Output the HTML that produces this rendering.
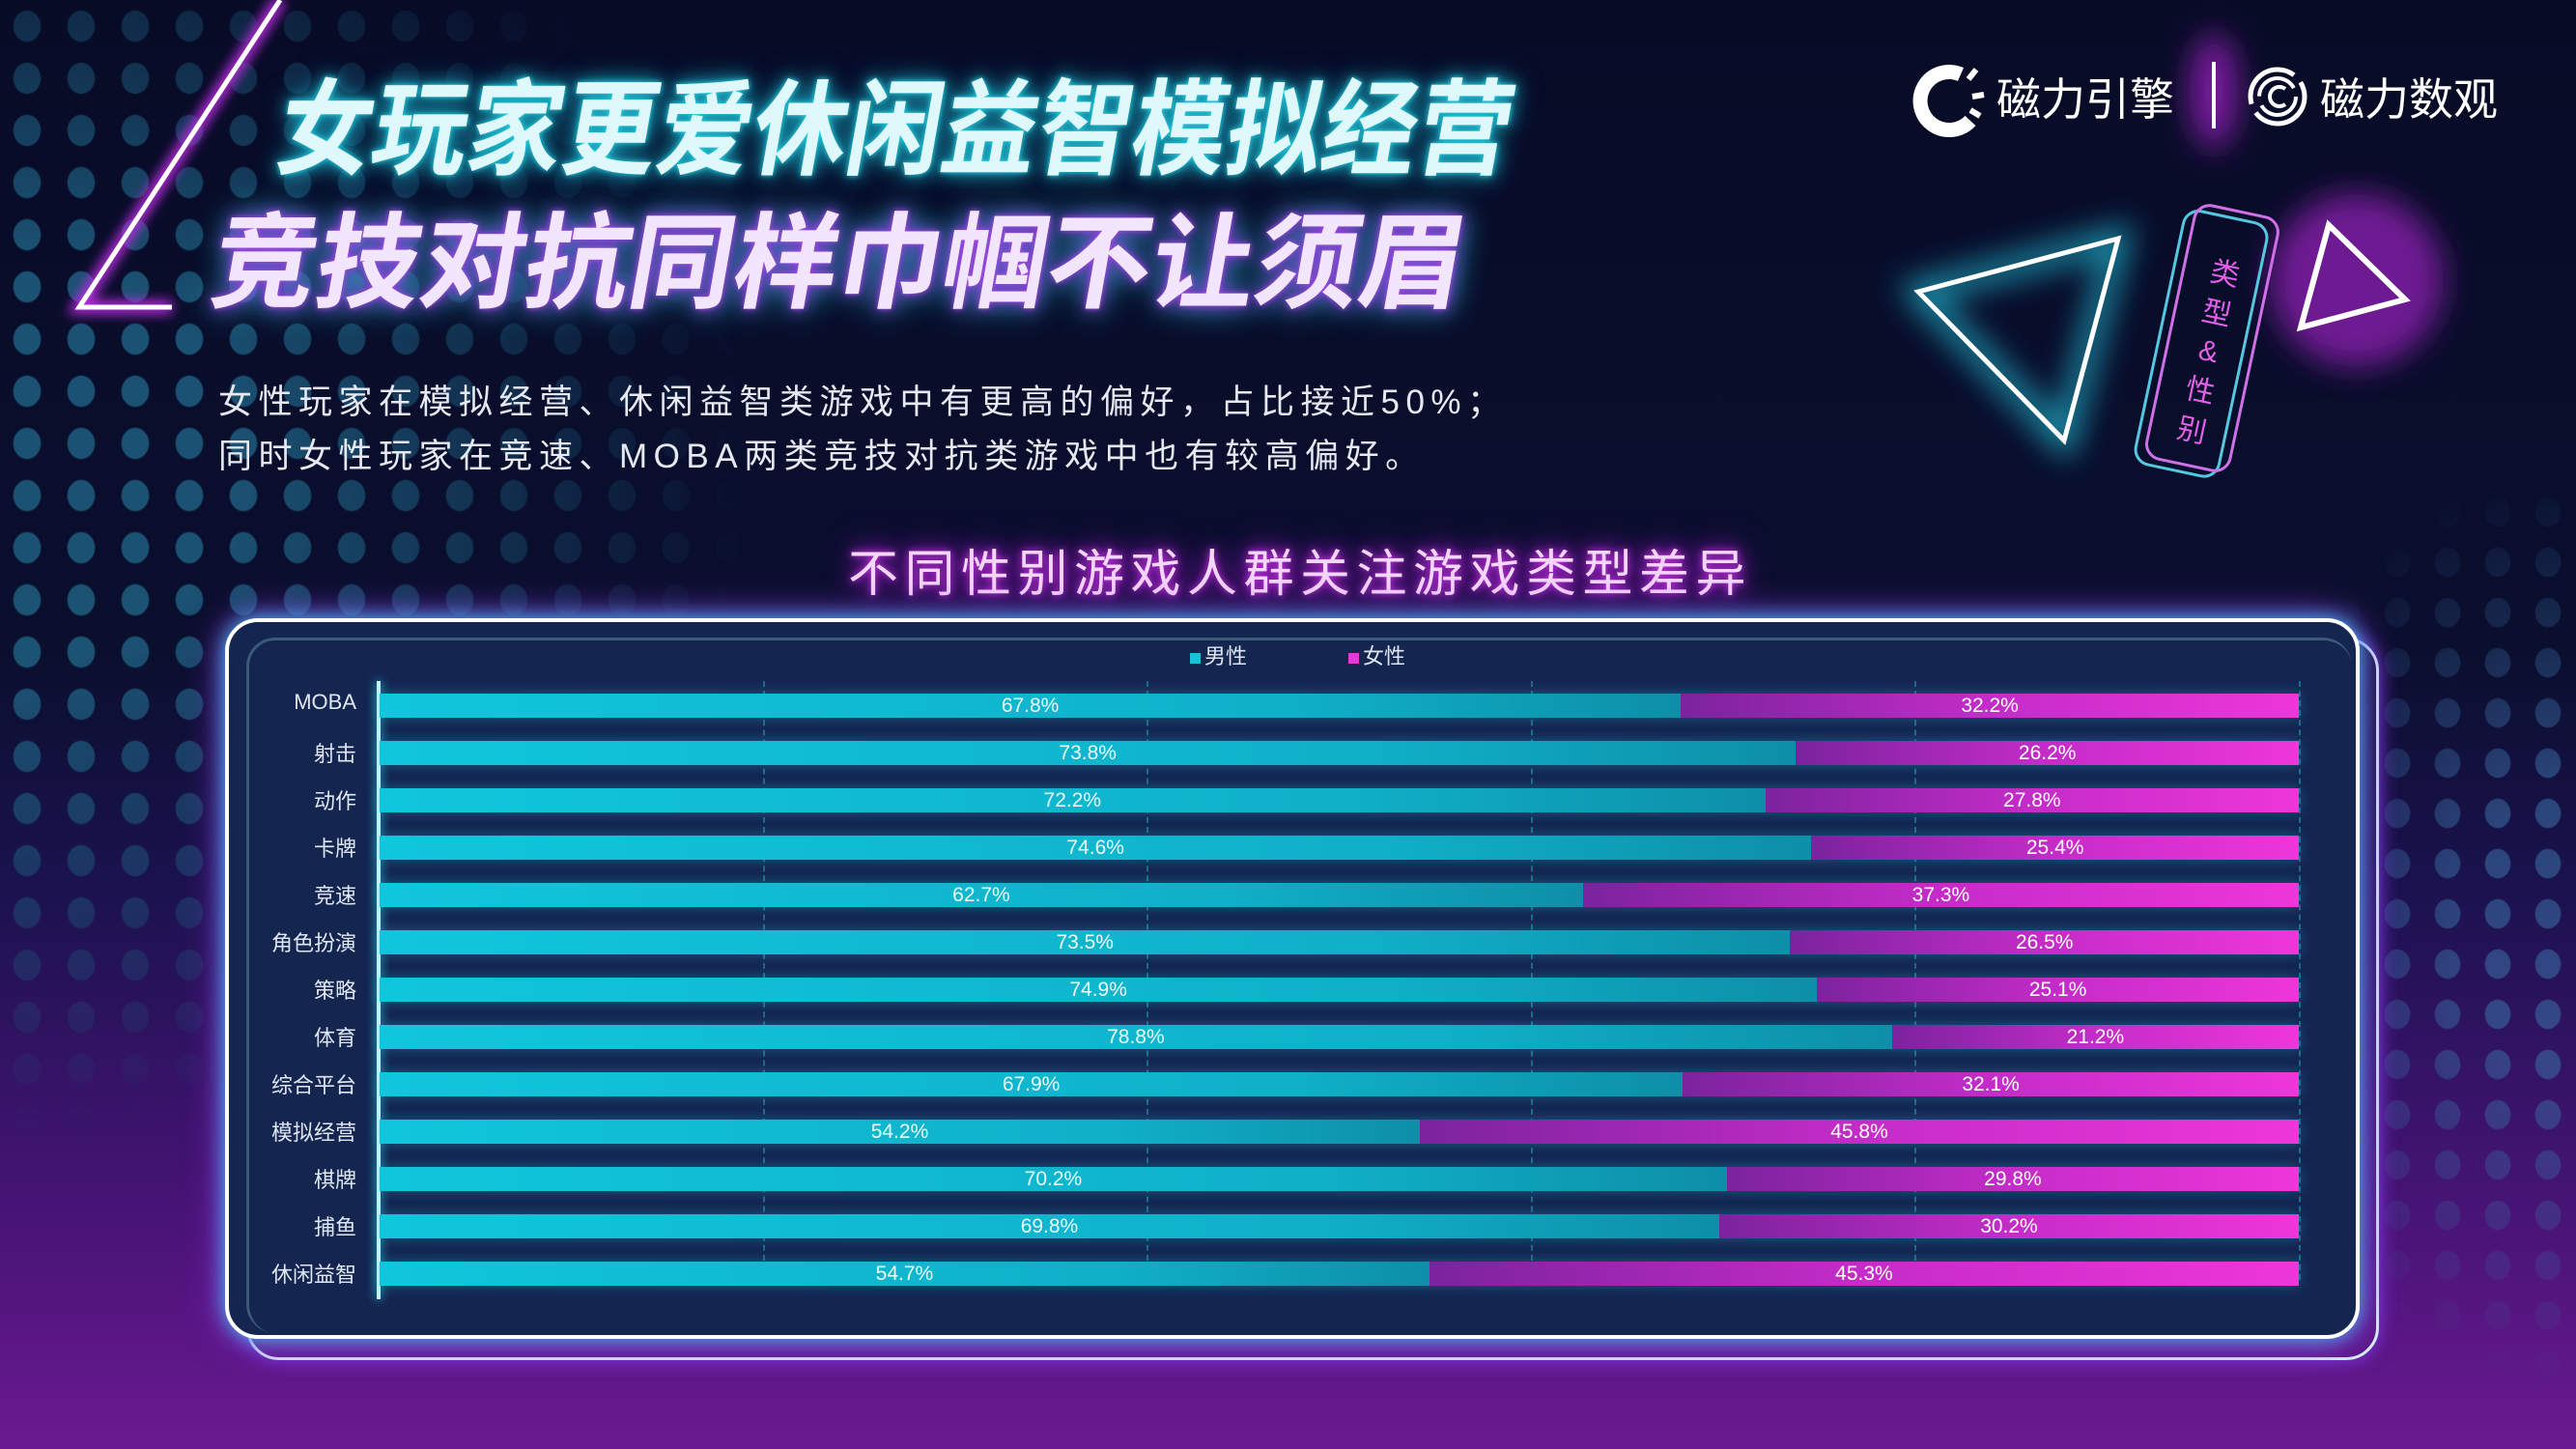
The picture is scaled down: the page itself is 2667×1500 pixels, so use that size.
<!DOCTYPE html>
<html><head><meta charset="utf-8"><style>
*{margin:0;padding:0;box-sizing:border-box}
body{width:2667px;height:1500px;overflow:hidden;font-family:"Liberation Sans","Noto Sans CJK SC",sans-serif;background:linear-gradient(180deg,#070b26 0%,#0a0f2e 45%,#1c1250 62%,#4a1478 85%,#6a1a90 100%);position:relative;color:#fff}
.abs{position:absolute}
.dots{left:0;top:0;width:1150px;height:1200px;background-image:radial-gradient(ellipse 15px 17px,#1f5f80 90%,transparent 100%);background-size:56px 54px;-webkit-mask-image:radial-gradient(ellipse 780px 700px at 0 480px,#000 30%,transparent 100%);mask-image:radial-gradient(ellipse 780px 700px at 0 480px,#000 30%,transparent 100%);opacity:.85}
.dots2{left:2300px;top:400px;width:367px;height:1100px;background-image:radial-gradient(ellipse 14px 16px,#3a6aa0 90%,transparent 100%);background-size:52px 52px;-webkit-mask-image:radial-gradient(ellipse 360px 480px at 367px 560px,#000 30%,transparent 100%);mask-image:radial-gradient(ellipse 360px 480px at 367px 560px,#000 30%,transparent 100%);opacity:.6}
.t{font-weight:bold;font-size:108px;white-space:nowrap;transform-origin:0 0;font-family:"Noto Sans CJK SC",sans-serif;line-height:1}
.t1{left:300px;top:72px;color:#dff8fb;transform:skewX(-10deg) scaleX(.91);text-shadow:0 0 6px #2ad9e8,0 0 18px #1aa9c0,0 0 30px #127f9a}
.t2{left:232px;top:210px;color:#f2e6ff;transform:skewX(-10deg) scaleX(1);text-shadow:0 0 6px #b04ce8,0 0 18px #8a2bd0,0 0 32px #2ad0e8}
.sub{left:226px;font-size:35px;letter-spacing:6.5px;color:#e6e9f3;white-space:nowrap}
.ctitle{left:878px;top:552px;font-size:52px;letter-spacing:6.5px;color:#f4d6ff;text-shadow:0 0 8px #d23ae8,0 0 20px #a21ad0,0 0 36px #a21ad0;white-space:nowrap}
.box2{left:255px;top:660px;width:2208px;height:748px;border:3px solid #d8f4ff;border-radius:34px;box-shadow:0 0 18px #7a3ae0}
.box{left:233px;top:640px;width:2210px;height:746px;border:4px solid #fff;border-radius:34px;background:#142550;box-shadow:0 0 22px #33c8f0,0 0 40px #9a2be0}
.inner{left:255px;top:660px;width:2180px;height:720px;border:3px solid #3b5a7a;border-radius:30px;border-right:none;border-bottom:none}
.grid{top:705px;height:620px;width:0;border-left:2px dashed #1d6a86}
.axis{left:390px;top:705px;width:4px;height:640px;background:#bff6ff;box-shadow:0 0 10px #2de0f0}
.row{position:absolute;left:393px;width:1987px;height:25px;display:flex;box-shadow:0 0 14px rgba(30,200,230,.35)}
.m{background:linear-gradient(90deg,#10c6dc,#0fb0c8 70%,#0e8fa8);display:flex;align-items:center;justify-content:center;font-size:21px;color:#eafcff}
.f{background:linear-gradient(90deg,#7b239e,#c42cc8 50%,#ee36da);display:flex;align-items:center;justify-content:center;font-size:21px;color:#fff;flex:1}
.lab{position:absolute;right:2298px;font-size:22px;color:#dfe6f4;white-space:nowrap;text-align:right}
.leg{top:662px;font-size:22px;color:#dfe6f4}
.sq{display:inline-block;width:11px;height:11px;margin-right:4px}
</style></head><body>
<div class="abs dots"></div>
<div class="abs dots2"></div>

<svg class="abs" style="left:0;top:0" width="2667" height="620">
<defs>
<filter id="g1" x="-50%" y="-50%" width="200%" height="200%"><feGaussianBlur stdDeviation="16"/></filter>
<filter id="g2" x="-50%" y="-50%" width="200%" height="200%"><feGaussianBlur stdDeviation="6"/></filter>
</defs>
<polyline points="290,0 82,318 178,318" fill="none" stroke="#b82ae0" stroke-width="14" filter="url(#g2)"/>
<polyline points="290,0 82,318 178,318" fill="none" stroke="#fff" stroke-width="5"/>
<circle cx="2440" cy="290" r="90" fill="#7a1a9e" filter="url(#g1)" opacity=".9"/>
<ellipse cx="2292" cy="95" rx="25" ry="60" fill="#7a1a9e" filter="url(#g1)"/>
<polygon points="1986,302 2193,247 2137,456" fill="none" stroke="#22c0d8" stroke-width="22" filter="url(#g1)" opacity=".8"/>
<polygon points="1986,302 2193,247 2137,456" fill="none" stroke="#fff" stroke-width="5"/>
<polygon points="2411,233 2490,310 2382,339" fill="none" stroke="#fff" stroke-width="6"/>
<g transform="rotate(12 2280 356)">
<rect x="2235" y="222" width="88" height="268" rx="16" fill="none" stroke="#55c8e0" stroke-width="3"/>
<rect x="2245" y="214" width="88" height="268" rx="16" fill="none" stroke="#d070e8" stroke-width="3"/>
<text x="2288" y="290" fill="#e060e8" font-size="30" text-anchor="middle" font-family="Noto Sans CJK SC,sans-serif">类</text>
<text x="2288" y="332" fill="#e060e8" font-size="30" text-anchor="middle" font-family="Noto Sans CJK SC,sans-serif">型</text>
<text x="2288" y="372" fill="#e060e8" font-size="30" text-anchor="middle" font-family="Liberation Sans,sans-serif">&amp;</text>
<text x="2288" y="414" fill="#e060e8" font-size="30" text-anchor="middle" font-family="Noto Sans CJK SC,sans-serif">性</text>
<text x="2288" y="456" fill="#e060e8" font-size="30" text-anchor="middle" font-family="Noto Sans CJK SC,sans-serif">别</text>
</g>
<path d="M2030,77 A30,30 0 1 0 2040,125" fill="none" stroke="#fff" stroke-width="15"/>
<line x1="2038" y1="82" x2="2046" y2="72" stroke="#fff" stroke-width="6"/>
<line x1="2042" y1="100" x2="2054" y2="98" stroke="#fff" stroke-width="6"/>
<line x1="2040" y1="114" x2="2050" y2="120" stroke="#fff" stroke-width="6"/>
<text x="2067" y="119" fill="#fff" font-size="46" font-family="Noto Sans CJK SC,sans-serif">磁力引擎</text>
<line x1="2292" y1="64" x2="2292" y2="133" stroke="#fff" stroke-width="4"/>
<circle cx="2358" cy="100" r="28" fill="none" stroke="#fff" stroke-width="5" stroke-dasharray="70 10"/>
<circle cx="2358" cy="100" r="19" fill="none" stroke="#fff" stroke-width="4" stroke-dasharray="50 10"/>
<path d="M2366,92 A10,10 0 1 0 2366,108" fill="none" stroke="#fff" stroke-width="4"/>
<text x="2402" y="119" fill="#fff" font-size="46" font-family="Noto Sans CJK SC,sans-serif">磁力数观</text>
</svg>

<div class="abs t t1">女玩家更爱休闲益智模拟经营</div>
<div class="abs t t2">竞技对抗同样巾帼不让须眉</div>
<div class="abs sub" style="top:388px">女性玩家在模拟经营、休闲益智类游戏中有更高的偏好，占比接近50%；</div>
<div class="abs sub" style="top:444px">同时女性玩家在竞速、MOBA两类竞技对抗类游戏中也有较高偏好。</div>
<div class="abs ctitle">不同性别游戏人群关注游戏类型差异</div>

<div class="abs box2"></div>
<div class="abs box"></div>
<div class="abs inner"></div>
<div class="abs leg" style="left:1232px"><span class="sq" style="background:#18c0d8"></span>男性</div>
<div class="abs leg" style="left:1396px"><span class="sq" style="background:#e838d8"></span>女性</div>
<div class="abs grid" style="left:790px"></div>
<div class="abs grid" style="left:1187px"></div>
<div class="abs grid" style="left:1585px"></div>
<div class="abs grid" style="left:1982px"></div>
<div class="abs grid" style="left:2380px"></div>
<div class="abs axis"></div>

<div class="lab" style="top:714px">MOBA</div><div class="row" style="top:718px"><div class="m" style="width:67.8%">67.8%</div><div class="f">32.2%</div></div>
<div class="lab" style="top:763px">射击</div><div class="row" style="top:767px"><div class="m" style="width:73.8%">73.8%</div><div class="f">26.2%</div></div>
<div class="lab" style="top:812px">动作</div><div class="row" style="top:816px"><div class="m" style="width:72.2%">72.2%</div><div class="f">27.8%</div></div>
<div class="lab" style="top:861px">卡牌</div><div class="row" style="top:865px"><div class="m" style="width:74.6%">74.6%</div><div class="f">25.4%</div></div>
<div class="lab" style="top:910px">竞速</div><div class="row" style="top:914px"><div class="m" style="width:62.7%">62.7%</div><div class="f">37.3%</div></div>
<div class="lab" style="top:959px">角色扮演</div><div class="row" style="top:963px"><div class="m" style="width:73.5%">73.5%</div><div class="f">26.5%</div></div>
<div class="lab" style="top:1008px">策略</div><div class="row" style="top:1012px"><div class="m" style="width:74.9%">74.9%</div><div class="f">25.1%</div></div>
<div class="lab" style="top:1057px">体育</div><div class="row" style="top:1061px"><div class="m" style="width:78.8%">78.8%</div><div class="f">21.2%</div></div>
<div class="lab" style="top:1106px">综合平台</div><div class="row" style="top:1110px"><div class="m" style="width:67.9%">67.9%</div><div class="f">32.1%</div></div>
<div class="lab" style="top:1155px">模拟经营</div><div class="row" style="top:1159px"><div class="m" style="width:54.2%">54.2%</div><div class="f">45.8%</div></div>
<div class="lab" style="top:1204px">棋牌</div><div class="row" style="top:1208px"><div class="m" style="width:70.2%">70.2%</div><div class="f">29.8%</div></div>
<div class="lab" style="top:1253px">捕鱼</div><div class="row" style="top:1257px"><div class="m" style="width:69.8%">69.8%</div><div class="f">30.2%</div></div>
<div class="lab" style="top:1302px">休闲益智</div><div class="row" style="top:1306px"><div class="m" style="width:54.7%">54.7%</div><div class="f">45.3%</div></div>
</body></html>
